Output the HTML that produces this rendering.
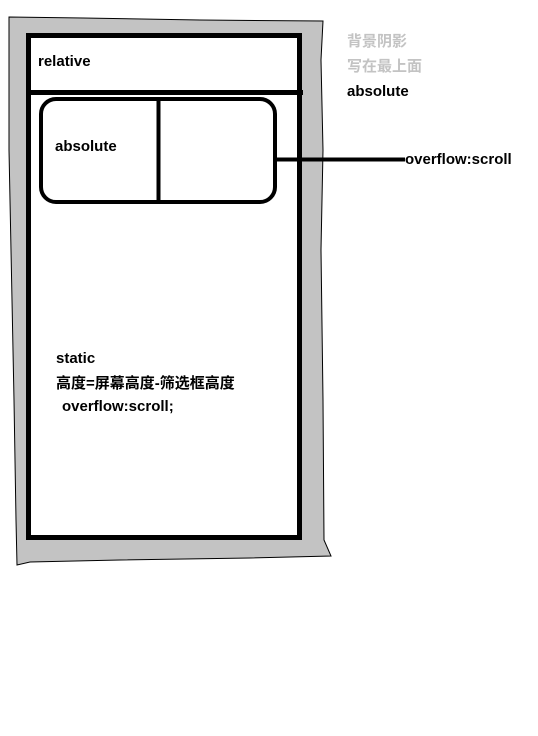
<!DOCTYPE html><html><head><style>
body{margin:0;width:538px;height:736px;background:#fff;position:relative;overflow:hidden;font:bold 15px "Liberation Sans","Noto Sans CJK SC",sans-serif;}
div{position:absolute;box-sizing:border-box}
.t{white-space:nowrap;line-height:16px}
</style></head><body>
<svg style="position:absolute;left:0;top:0" width="538" height="736">
<path d="M9,17 L83,18 L200,20 L323,21 L321,60 L323,150 L321,250 L323,400 L324,540 L331,556 L250,558 L120,560 L30,562 L17,565 L16,520 L14,400 L12,300 L9,150 Z" fill="#c3c3c3" stroke="#000" stroke-width="1"/>
<rect x="28.5" y="35.5" width="271" height="502" fill="#fff" stroke="#000" stroke-width="5"/>
<line x1="28" y1="92.5" x2="303" y2="92.5" stroke="#000" stroke-width="5"/>
<rect x="41" y="99" width="234" height="103" rx="15" fill="#fff" stroke="#000" stroke-width="4"/>
<line x1="158.5" y1="99" x2="158.5" y2="202" stroke="#000" stroke-width="4"/>
<line x1="277" y1="159.5" x2="405" y2="159.5" stroke="#000" stroke-width="4"/>
</svg>
<div class="t" style="left:38px;top:54px">relative</div>
<div class="t" style="left:55px;top:139px">absolute</div>
<div class="t" style="left:56px;top:351px">static</div>
<div class="t" style="left:56px;top:376px">高度=屏幕高度-筛选框高度</div>
<div class="t" style="left:62px;top:399px">overflow:scroll;</div>
<div class="t" style="left:347px;top:34px;color:#c3c3c3">背景阴影</div>
<div class="t" style="left:347px;top:59px;color:#c3c3c3">写在最上面</div>
<div class="t" style="left:347px;top:84px">absolute</div>
<div class="t" style="left:405px;top:152px">overflow:scroll</div>
</body></html>
